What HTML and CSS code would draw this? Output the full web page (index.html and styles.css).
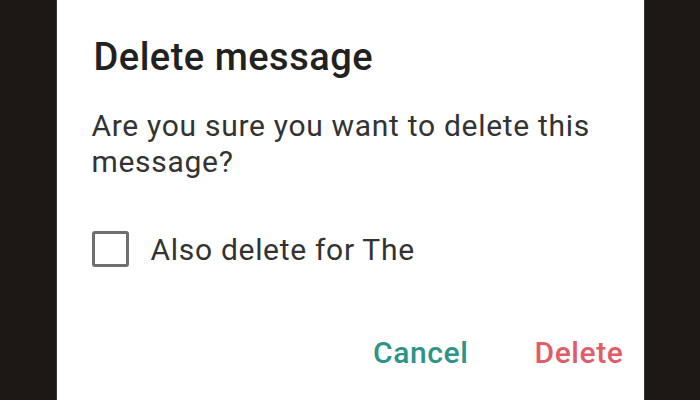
FILE: index.html
```html
<!DOCTYPE html>
<html lang="en">
<head>
  <meta charset="UTF-8">
  <title>Delete message</title>
  <link rel="stylesheet" href="styles.css">
</head>
<body>

  <div class="dialog">
    <h2 class="dialog-title">Delete message</h2>
    <p class="dialog-text">Are you sure you want to delete this message?</p>

    <label class="check-row">
      <input type="checkbox" class="check-input">
      <span class="check-box"></span>
      <span class="check-label">Also delete for The</span>
    </label>

    <div class="dialog-actions">
      <button class="btn btn-cancel">Cancel</button>
      <button class="btn btn-delete">Delete</button>
    </div>
  </div>

</body>
</html>
```

FILE: styles.css
```css
body {
  margin: 0;
  height: 400px;
  background: #1b1815;
  font-family: Roboto, 'Noto Sans', sans-serif;
  display: flex;
  justify-content: center;
  overflow: hidden;
}

.dialog {
  width: 589px;
  height: 400px;
  box-sizing: border-box;
  background: #fff;
  padding: 33px 20px 0 37px;
  border-left: 1px solid #3a3633;
  border-right: 1px solid #3a3633;
}

.dialog-title {
  margin: 0;
  font-size: 38px;
  font-weight: 500;
  line-height: 48px;
  letter-spacing: 0.5px;
  color: #212121;
}

.dialog-text {
  margin: 27px 0 0 -2px;
  font-size: 30px;
  line-height: 36px;
  letter-spacing: 0.7px;
  color: #333;
}

.check-row {
  display: flex;
  align-items: center;
  margin-top: 51px;
  margin-left: -2px;
  gap: 22px;
}

.check-input {
  display: none;
}

.check-box {
  width: 31px;
  height: 30px;
  border: 3px solid #6f6f6f;
  border-radius: 3px;
}

.check-label {
  font-size: 30px;
  letter-spacing: 0.7px;
  color: #333;
}

.dialog-actions {
  display: flex;
  justify-content: flex-end;
  gap: 66px;
  margin-top: 68px;
}

.btn {
  border: none;
  background: none;
  padding: 0;
  font-family: inherit;
  font-size: 30px;
  font-weight: 500;
  letter-spacing: 0.6px;
}

.btn-cancel {
  color: #2e9486;
}

.btn-delete {
  color: #e05d68;
}
```
